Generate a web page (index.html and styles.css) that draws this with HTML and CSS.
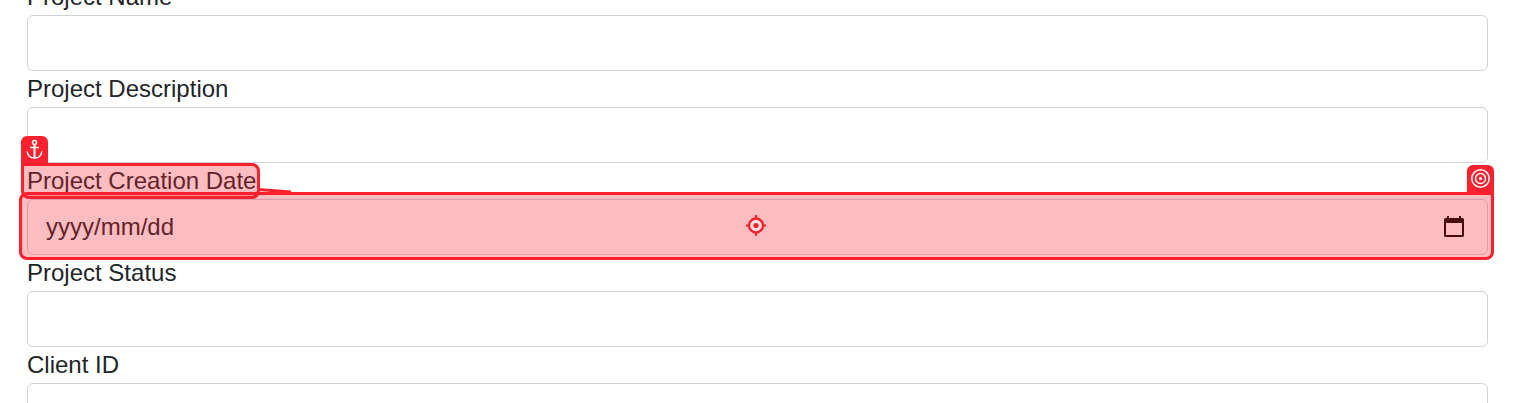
FILE: index.html
```html
<!DOCTYPE html>
<html lang="en">
<head>
<meta charset="utf-8">
<title>Project form</title>
<link rel="stylesheet" href="styles.css">
</head>
<body>
<main class="form">
  <div class="field"><div class="label">Project Name</div><div class="control"></div></div>
  <div class="field"><div class="label">Project Description</div><div class="control"></div></div>
  <div class="field">
    <div class="label">Project Creation Date</div>
    <div class="control date"><span>yyyy/mm/dd</span>
      <svg class="calendar" width="20" height="22" viewBox="0 0 20 22"><path fill="#000" fill-rule="evenodd" d="M3 0h2v2h10V0h2v2h1.500q1.500 0 1.500 1.500v16q0 1.500-1.500 1.500h-17Q0 21 0 19.500v-16Q0 2 1.500 2H3zM2 7v12h16V7z"/></svg>
    </div>
    <div class="mark anchor-mark"></div>
    <div class="mark target-mark"></div>
    <div class="tab anchor-tab">
      <svg width="27" height="27" viewBox="0 0 27 27" fill="none" stroke="#fff" stroke-width="1.500"><circle cx="13.500" cy="6.500" r="2"/><path stroke-width="2" d="M13.500 8.500v13"/><path d="M9 11.500h9M6.200 15.500c.5 4 3.500 6.500 7.300 6.500s6.800-2.500 7.300-6.500"/></svg>
    </div>
    <div class="tab target-tab">
      <svg width="27" height="27" viewBox="0 0 27 27" fill="none" stroke="#fff" stroke-width="1.500"><circle cx="13.500" cy="13.500" r="8.700"/><circle cx="13.500" cy="13.500" r="5"/><circle cx="13.500" cy="13.500" r="1.600" fill="#fff" stroke="none"/></svg>
    </div>
    <svg class="link" width="34" height="6" viewBox="0 0 34 6"><path d="M0 1.500L33 4" stroke="#f8212d" stroke-width="3"/></svg>
    <svg class="crosshair" width="20" height="21" viewBox="0 0 20 21"><circle cx="10" cy="10.500" r="7" fill="#fee2e4" stroke="#f8212d" stroke-width="2.400"/><circle cx="10" cy="10.500" r="2.600" fill="#f8212d"/><path stroke="#f8212d" stroke-width="2" d="M10 0v4M10 17v4M0 10.500h4M16 10.500h4"/></svg>
  </div>
  <div class="field"><div class="label">Project Status</div><div class="control"></div></div>
  <div class="field"><div class="label">Client ID</div><div class="control"></div></div>
</main>
</body>
</html>
```
FILE: styles.css
```css
* { box-sizing: border-box; }
html, body { height: 100%; }
body {
  margin: 0;
  overflow: hidden;
  background: #fff;
  color: #212529;
  font: 24px/36px "Liberation Sans", Arial, sans-serif;
}
.form { margin: -21px 25px 0 27px; }
.form::before { content: ""; display: table; }
.field { position: relative; height: 92px; }
.label { height: 36px; white-space: nowrap; }
.control {
  height: 56px;
  border: 1px solid #ced4da;
  border-radius: 6px;
  background: #fff;
}
.date {
  display: flex;
  align-items: center;
  justify-content: space-between;
  padding: 0 23px 0 18px;
}
svg { display: block; }
.mark {
  position: absolute;
  border: 3px solid #f8212d;
  background: rgba(248, 33, 45, .3);
}
.anchor-mark { left: -6px; top: 0; width: 239px; height: 36px; border-radius: 0 8px 8px 8px; }
.target-mark { left: -8px; top: 29px; width: 1475px; height: 68px; border-radius: 8px 0 8px 8px; }
.tab {
  position: absolute;
  width: 27px;
  height: 28px;
  border-radius: 6px 6px 0 0;
  background: #f8212d;
}
.anchor-tab { left: -6px; top: -27px; }
.target-tab { left: 1440px; top: 2px; }
.link { position: absolute; left: 231px; top: 25px; }
.crosshair { position: absolute; left: 719px; top: 52px; }
```
